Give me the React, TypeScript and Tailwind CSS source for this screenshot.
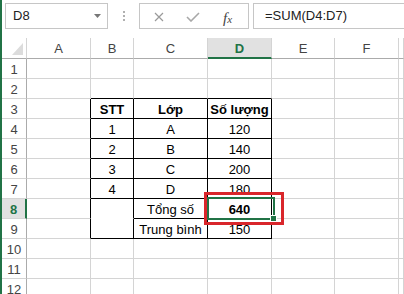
import React from "react";

const GREEN = "#217346";
const colLetters = ["A", "B", "C", "D", "E", "F", ""];

type Cell = { t?: string; b?: boolean };
const data: Record<number, Record<string, Cell>> = {
  3: { B: { t: "STT", b: true }, C: { t: "Lớp", b: true }, D: { t: "Số lượng", b: true } },
  4: { B: { t: "1" }, C: { t: "A" }, D: { t: "120" } },
  5: { B: { t: "2" }, C: { t: "B" }, D: { t: "140" } },
  6: { B: { t: "3" }, C: { t: "C" }, D: { t: "200" } },
  7: { B: { t: "4" }, C: { t: "D" }, D: { t: "180" } },
  8: { C: { t: "Tổng số" }, D: { t: "640", b: true } },
  9: { C: { t: "Trung bình" }, D: { t: "150" } },
};

const inTable = (r: number, c: string) => r >= 3 && r <= 9 && ["B", "C", "D"].includes(c);

function cellBorder(r: number, c: string) {
  // right border black?
  let right = "border-r-[#d4d4d4]";
  let bottom = "border-b-[#d4d4d4]";
  if (r >= 3 && r <= 9 && ["A", "B", "C", "D"].includes(c)) right = "border-r-black";
  if (r >= 2 && r <= 9 && ["B", "C", "D"].includes(c)) bottom = "border-b-black";
  if (r === 8 && c === "B") bottom = "border-b-white";
  return `${right} ${bottom}`;
}

export default function App() {
  const rows = [1, 2, 3, 4, 5, 6, 7, 8, 9, 10, 11, 12];
  return (
    <div
      className="relative w-[404px] h-[294px] overflow-hidden bg-white border-l-2 border-l-[#217346]"
      style={{ fontFamily: '"Liberation Sans", Arial, sans-serif' }}
    >
      {/* Formula bar */}
      <div className="flex h-[38px] items-start pt-[3px] pl-[3px]">
        <div className="relative flex h-[26px] w-[103px] items-center border border-[#c6c6c6] pl-[7px] text-[13px] text-[#222]">
          D8
          <svg className="absolute right-[6px] top-[10px]" width="7" height="4" viewBox="0 0 7 4">
            <path d="M0 0 H7 L3.5 4 Z" fill="#777" />
          </svg>
        </div>
        <div className="flex h-[26px] w-[31px] flex-col items-center justify-center gap-[2px]">
          <div className="h-[2px] w-[2px] bg-[#b0b0b0]" />
          <div className="h-[2px] w-[2px] bg-[#b0b0b0]" />
          <div className="h-[2px] w-[2px] bg-[#b0b0b0]" />
        </div>
        <div className="relative h-[26px] w-[110px] border border-[#c6c6c6]">
          <svg className="absolute left-[14px] top-[8px]" width="10" height="10" viewBox="0 0 10 10">
            <path d="M1 1 L9 9 M9 1 L1 9" stroke="#9a9a9a" strokeWidth="1.2" fill="none" />
          </svg>
          <svg className="absolute left-[46px] top-[8px]" width="14" height="10" viewBox="0 0 14 10">
            <path d="M1 5 L5 9 L13 1" stroke="#a8a8a8" strokeWidth="1.6" fill="none" />
          </svg>
          <div
            className="absolute left-[83px] top-[3px] text-[15px] italic text-[#444]"
            style={{ fontFamily: '"Liberation Serif", "Times New Roman", serif' }}
          >
            f<span className="text-[11px]">x</span>
          </div>
        </div>
        <div className="ml-[4px] flex h-[26px] flex-1 items-center border border-r-0 border-[#c6c6c6] pl-[11px] text-[13px] text-[#222]">
          =SUM(D4:D7)
        </div>
      </div>

      {/* Grid */}
      <div className="grid grid-cols-[25px_64px_43px_74px_64px_63px_64px_1fr] text-[13px]">
        {/* header row */}
        <div className="relative h-[21px] border-r border-b border-r-[#d4d4d4] border-b-[#ababab] bg-white">
          <svg className="absolute left-[10px] top-[5px]" width="11" height="12" viewBox="0 0 11 12">
            <path d="M11 0 V12 H0 Z" fill="#dcdcdc" />
          </svg>
        </div>
        {colLetters.map((l, i) =>
          l === "D" ? (
            <div
              key={i}
              className="h-[21px] border-r border-r-[#d4d4d4] border-b-2 border-b-[#217346] bg-[#e1e1e1] pt-[3px] text-center font-bold leading-[15px] text-[#217346]"
            >
              {l}
            </div>
          ) : (
            <div
              key={i}
              className="h-[21px] border-r border-b border-r-[#d4d4d4] border-b-[#ababab] pt-[3px] text-center leading-[15px] text-[#444]"
            >
              {l}
            </div>
          )
        )}
        {rows.map((r) => (
          <React.Fragment key={r}>
            {r === 8 ? (
              <div className="h-[20px] border-r-2 border-b border-r-[#217346] border-b-[#d4d4d4] bg-[#e1e1e1] pt-[2px] text-center font-bold leading-[18px] text-[#217346]">
                {r}
              </div>
            ) : (
              <div className="h-[20px] border-r border-b border-r-[#ababab] border-b-[#d4d4d4] pt-[2px] text-center leading-[18px] text-[#444]">
                {r}
              </div>
            )}
            {colLetters.map((c, i) => {
              const cell = data[r]?.[c];
              return (
                <div
                  key={i}
                  className={`h-[20px] whitespace-nowrap border-r border-b pt-[2px] text-center leading-[18px] text-black ${cellBorder(r, c)} ${
                    cell?.b ? "font-bold" : ""
                  } ${inTable(r, c) ? "" : ""}`}
                >
                  {cell?.t ?? ""}
                </div>
              );
            })}
          </React.Fragment>
        ))}
      </div>

      {/* Selection overlay */}
      <div className="absolute left-[205px] top-[197px] h-[23px] w-[68px] border-2 border-[#217346]" />
      <div className="absolute left-[268px] top-[215px] h-[7px] w-[7px] border border-white bg-[#217346]" />
      {/* Red highlight box */}
      <div className="absolute left-[202px] top-[192px] h-[33px] w-[80px] border-[3px] border-[#d9262b]" />
    </div>
  );
}
